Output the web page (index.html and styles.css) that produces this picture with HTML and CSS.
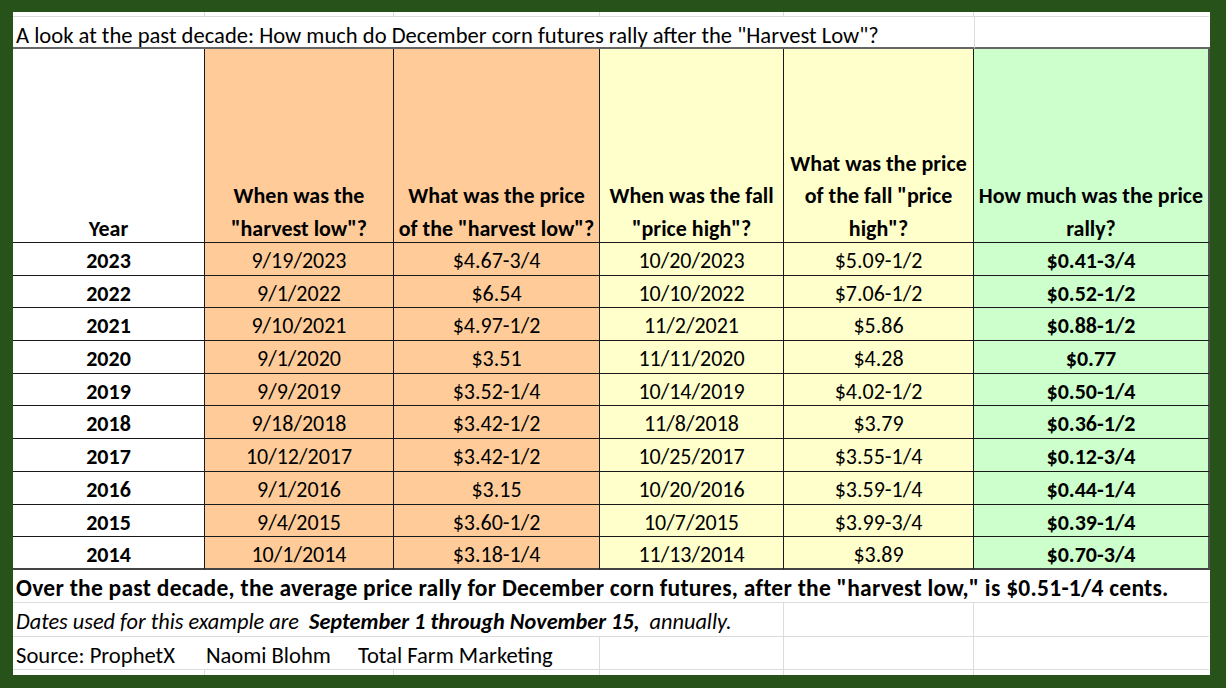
FILE: index.html
```html
<!DOCTYPE html>
<html>
<head>
<meta charset="utf-8">
<link rel="stylesheet" href="styles.css">
</head>
<body>
<div class="sheet">
  <div class="c gl"></div><div class="c gl"></div><div class="c gl"></div><div class="c gl"></div><div class="c gl"></div><div class="c gl gl-last"></div>

  <div class="c title">A look at the past decade: How much do December corn futures rally after the "Harvest Low"?</div>
  <div class="c title-end"></div>

  <div class="c h white"><span class="ht">Year</span></div>
  <div class="c h orange"><span class="ht">When was the<br>"harvest low"?</span></div>
  <div class="c h orange"><span class="ht">What was the price<br>of the "harvest low"?</span></div>
  <div class="c h yellow"><span class="ht">When was the fall<br>"price high"?</span></div>
  <div class="c h yellow"><span class="ht">What was the price<br>of the fall "price<br>high"?</span></div>
  <div class="c h green last"><span class="ht">How much was the price<br>rally?</span></div>

  <div class="c d white b">2023</div><div class="c d orange">9/19/2023</div><div class="c d orange">$4.67-3/4</div><div class="c d yellow">10/20/2023</div><div class="c d yellow">$5.09-1/2</div><div class="c d green b last">$0.41-3/4</div>
  <div class="c d white b">2022</div><div class="c d orange">9/1/2022</div><div class="c d orange">$6.54</div><div class="c d yellow">10/10/2022</div><div class="c d yellow">$7.06-1/2</div><div class="c d green b last">$0.52-1/2</div>
  <div class="c d white b">2021</div><div class="c d orange">9/10/2021</div><div class="c d orange">$4.97-1/2</div><div class="c d yellow">11/2/2021</div><div class="c d yellow">$5.86</div><div class="c d green b last">$0.88-1/2</div>
  <div class="c d white b">2020</div><div class="c d orange">9/1/2020</div><div class="c d orange">$3.51</div><div class="c d yellow">11/11/2020</div><div class="c d yellow">$4.28</div><div class="c d green b last">$0.77</div>
  <div class="c d white b">2019</div><div class="c d orange">9/9/2019</div><div class="c d orange">$3.52-1/4</div><div class="c d yellow">10/14/2019</div><div class="c d yellow">$4.02-1/2</div><div class="c d green b last">$0.50-1/4</div>
  <div class="c d white b">2018</div><div class="c d orange">9/18/2018</div><div class="c d orange">$3.42-1/2</div><div class="c d yellow">11/8/2018</div><div class="c d yellow">$3.79</div><div class="c d green b last">$0.36-1/2</div>
  <div class="c d white b">2017</div><div class="c d orange">10/12/2017</div><div class="c d orange">$3.42-1/2</div><div class="c d yellow">10/25/2017</div><div class="c d yellow">$3.55-1/4</div><div class="c d green b last">$0.12-3/4</div>
  <div class="c d white b">2016</div><div class="c d orange">9/1/2016</div><div class="c d orange">$3.15</div><div class="c d yellow">10/20/2016</div><div class="c d yellow">$3.59-1/4</div><div class="c d green b last">$0.44-1/4</div>
  <div class="c d white b">2015</div><div class="c d orange">9/4/2015</div><div class="c d orange">$3.60-1/2</div><div class="c d yellow">10/7/2015</div><div class="c d yellow">$3.99-3/4</div><div class="c d green b last">$0.39-1/4</div>
  <div class="c d white b bot">2014</div><div class="c d orange bot">10/1/2014</div><div class="c d orange bot">$3.18-1/4</div><div class="c d yellow bot">11/13/2014</div><div class="c d yellow bot">$3.89</div><div class="c d green b last bot">$0.70-3/4</div>

  <div class="c foot summary">Over the past decade, the average price rally for December corn futures, after the "harvest low," is $0.51-1/4 cents.</div>

  <div class="c foot dates"><i>Dates used for this example are&nbsp; <b>September 1 through November 15,</b>&nbsp; annually.</i></div>
  <div class="c foot gl"></div><div class="c foot gl gl-last"></div>

  <div class="c foot source"><span>Source: ProphetX</span><span class="sp1">Naomi Blohm</span><span class="sp2">Total Farm Marketing</span></div>
  <div class="c foot gl"></div><div class="c foot gl"></div><div class="c foot gl gl-last"></div>

  <div class="c gl nb"></div><div class="c gl nb"></div><div class="c gl nb"></div><div class="c gl nb"></div><div class="c gl nb"></div><div class="c gl nb gl-last"></div>
</div>
</body>
</html>
```

FILE: styles.css
```css
html, body {
  margin: 0;
  padding: 0;
}
body {
  background: #27531a;
  width: 1226px;
  height: 688px;
  overflow: hidden;
  font-family: Carlito, Lato, "Liberation Sans", sans-serif;
  color: #000;
}
.sheet {
  margin: 12px 0 0 13px;
  width: 1197px;
  background: #fff;
  display: grid;
  grid-template-columns: 192px 189px 206px 184px 190px 236px;
  grid-template-rows: 5px 32px 194px repeat(10, 32.7px) 33px 34px 33px 5px;
  font-size: 22px;
}
.c {
  box-sizing: border-box;
  white-space: nowrap;
  overflow: visible;
  min-width: 0;
}
.gl {
  border-right: 1px solid #dcdcdc;
  border-bottom: 1px solid #dcdcdc;
}
.gl-last {
  border-right: 2px solid #fff;
}
.nb {
  border-bottom: none;
}
.title {
  grid-column: 1 / 6;
  border-bottom: 2px solid #666;
  padding: 5px 0 0 3px;
  display: flex;
  align-items: center;
  font-size: 22.6px;
}
.title-end {
  border-left: 1px solid #dcdcdc;
  border-bottom: 2px solid #666;
}
.h, .d {
  border-right: 1px solid #1a1a1a;
  border-bottom: 1px solid #1a1a1a;
  text-align: center;
}
.h {
  font-weight: bold;
  display: flex;
  flex-direction: column;
  justify-content: flex-end;
  line-height: 32.5px;
}
.ht {
  display: block;
  margin-bottom: -3px;
}
.d {
  line-height: 32px;
  padding-top: 2px;
}
.b { font-weight: bold; }
.last {
  border-right: 2px solid #555;
}
.bot {
  border-bottom: 2px solid #444;
}
.white { background: #fff; }
.orange { background: #ffcc99; }
.yellow { background: #ffffcc; }
.green { background: #ccffcc; }
.foot {
  border-bottom: 1px solid #dcdcdc;
  display: flex;
  align-items: center;
  padding: 4px 0 0 3px;
  font-size: 22.6px;
}
.summary {
  grid-column: 1 / 7;
  font-weight: bold;
  font-size: 23.5px;
  letter-spacing: 0.27px;
  border-right: 2px solid #fff;
}
.dates {
  grid-column: 1 / 5;
  border-right: 1px solid #dcdcdc;
  font-size: 22.3px;
}
.source {
  grid-column: 1 / 4;
  border-right: 1px solid #dcdcdc;
}
.source .sp1 { margin-left: 31px; }
.source .sp2 { margin-left: 27px; }
```
